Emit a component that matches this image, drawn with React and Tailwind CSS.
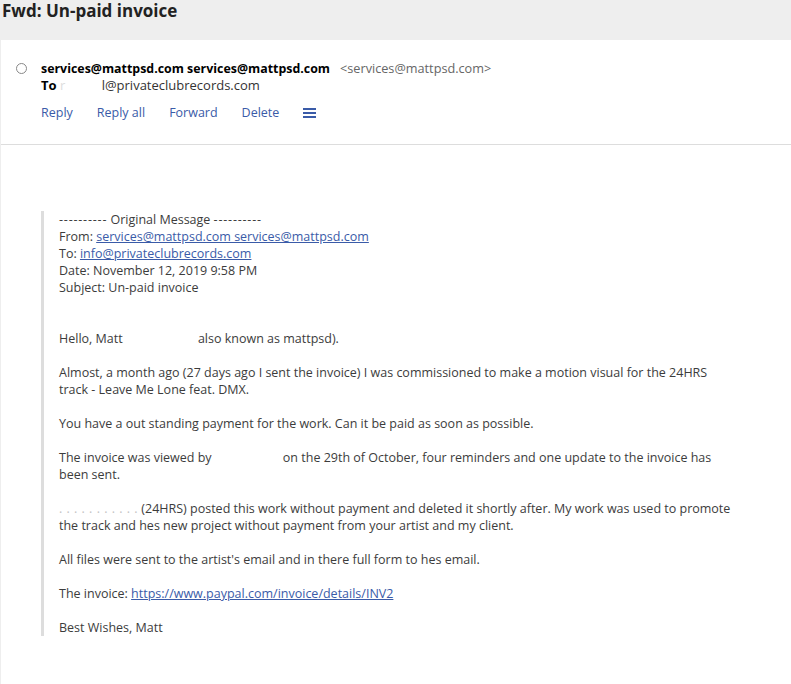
import React from 'react'

const Blank = ({ w }) => <span className="inline-block" style={{ width: w }} />

const App = () => {
  const font = { fontFamily: '"Open Sans", "Noto Sans", sans-serif' }
  return (
    <div className="w-[791px] h-[684px] bg-[#eeeeee] overflow-hidden text-[#3c3c3c]" style={font}>
      <h1 className="h-[40px] pl-[2px] text-[17px] leading-[22px] font-bold text-[#222222]">
        Fwd: Un-paid invoice
      </h1>
      <div className="ml-[1px] bg-white">
        <div className="border-b border-[#dddddd] pt-[20px] pb-[22px]">
          <div className="flex">
            <div className="w-[40px] flex justify-center pl-[1px] pt-[3px]">
              <span className="w-[11px] h-[11px] rounded-full border border-[#888888]" />
            </div>
            <div>
              <div className="flex items-baseline text-[12.4px] leading-[16px]">
                <span className="font-bold text-black">services@mattpsd.com services@mattpsd.com</span>
                <span className="ml-[10px] text-[12.7px] text-[#666666]">&lt;services@mattpsd.com&gt;</span>
              </div>
              <div className="text-[13px] leading-[16px] text-[#333333]">
                <span className="font-bold text-black">To</span>
                <span className="text-[#dddddd]"> r </span>
                <Blank w={33} />
                <span>l@privateclubrecords.com</span>
              </div>
              <div className="flex items-center gap-[24px] mt-[11px] text-[12.5px] leading-[18px] text-[#3a5ba8]">
                <span>Reply</span>
                <span>Reply all</span>
                <span>Forward</span>
                <span>Delete</span>
                <svg width="13" height="12" viewBox="0 0 13 12">
                  <rect x="0" y="1" width="13" height="2" fill="#3a5ba8" />
                  <rect x="0" y="5" width="13" height="2" fill="#3a5ba8" />
                  <rect x="0" y="9" width="13" height="2" fill="#3a5ba8" />
                </svg>
              </div>
            </div>
          </div>
        </div>
        <div className="pt-[66px] pl-[40px] pb-[60px]">
          <div className="border-l-[3px] border-[#dddddd] pl-[15px] text-[12.5px] leading-[17px] whitespace-nowrap">
            <div>
              <span className="tracking-[0.8px]">----------</span> Original Message{' '}
              <span className="tracking-[0.8px]">----------</span>
            </div>
            <div>
              From: <a className="underline text-[#3a5ba8]">services@mattpsd.com services@mattpsd.com</a>
            </div>
            <div>
              To: <a className="underline text-[#3a5ba8]">info@privateclubrecords.com</a>
            </div>
            <div>Date: November 12, 2019 9:58 PM</div>
            <div>Subject: Un-paid invoice</div>
            <div className="h-[34px]" />
            <div>
              Hello, Matt <Blank w={72} />also known as mattpsd).
            </div>
            <div className="h-[17px]" />
            <div>
              Almost, a month ago (27 days ago I sent the invoice) I was commissioned to make a motion visual for the 24HRS
              <br />
              track - Leave Me Lone feat. DMX.
            </div>
            <div className="h-[17px]" />
            <div>You have a out standing payment for the work. Can it be paid as soon as possible.</div>
            <div className="h-[17px]" />
            <div>
              The invoice was viewed by <Blank w={68} />on the 29th of October, four reminders and one update to the invoice has
              <br />
              been sent.
            </div>
            <div className="h-[17px]" />
            <div>
              <span className="text-[#c4c4c4] tracking-[0.5px]">. . . . . . . . . . .</span> (24HRS) posted this work without payment and deleted it shortly after. My work was used to promote
              <br />
              the track and hes new project without payment from your artist and my client.
            </div>
            <div className="h-[17px]" />
            <div>All files were sent to the artist's email and in there full form to hes email.</div>
            <div className="h-[17px]" />
            <div>
              The invoice: <a className="underline text-[#3a5ba8]">https://www.paypal.com/invoice/details/INV2</a>
            </div>
            <div className="h-[17px]" />
            <div>Best Wishes, Matt</div>
          </div>
        </div>
      </div>
    </div>
  )
}

export default App
